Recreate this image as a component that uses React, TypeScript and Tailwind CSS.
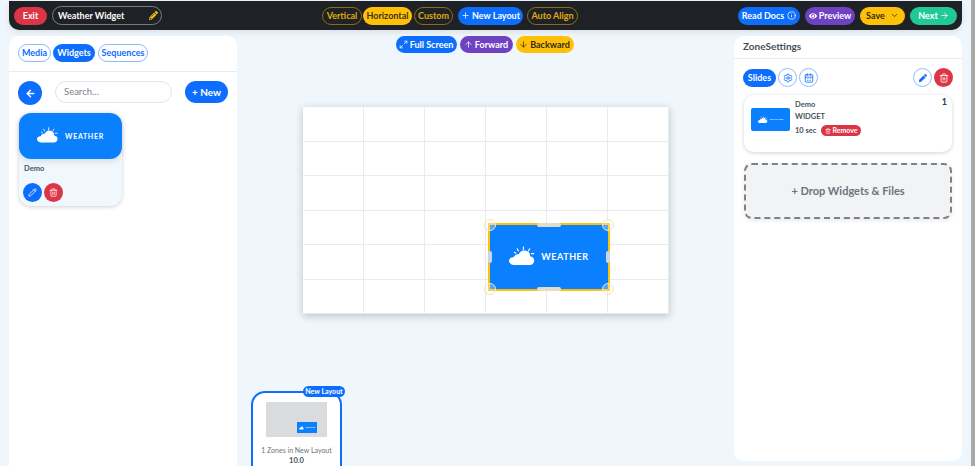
import {ArrowDown, ArrowLeft, ArrowRight, ArrowUp, CalendarDays, ChevronDown, Info, Maximize2, Pencil, Plus, Settings, Trash2} from "lucide-react";
import {FaEye, FaPen, FaPencilAlt} from "react-icons/fa";

const font = "font-['Lato','Noto_Sans',sans-serif]";

interface WeatherLogoProps {
    width: number;
    textClass: string;
    gapClass: string;
}

const WeatherLogo = ({width, textClass, gapClass}: WeatherLogoProps) => (
    <div className={`flex flex-row items-center ${gapClass}`}>
        <svg width={width} height={width * 0.8} viewBox="0 0 30 24" fill="none">
            <g stroke="#fff" strokeWidth="1.2" strokeLinecap="round">
                <path d="M16 1v3M9 3l1.400 2.400M23 3l-1.400 2.400M27.500 8.500h-2.500M6 7l1.500 1"/>
            </g>
            <path d="M11 9a6.500 6.500 0 0 1 12.500 2.500c2.500.5 4.500 2 4.500 4.500 0 3-2 5-5 5H5c-3 0-5-2-5-4.500S2 12.500 5 12.500c1-2 3.500-3.500 6-3.500z" fill="#fff"/>
        </svg>
        <span className={`font-bold text-white ${textClass}`}>WEATHER</span>
    </div>
);

const TopBar = () => (
    <header className="h-[29px] mt-px ml-[9px] mr-[9px] pl-[5px] pr-[5px] bg-[#1e2227] rounded-b-[10px] shadow-[0_2px_6px_rgba(0,0,0,0.1)] flex flex-row items-center shrink-0">
        <div className="flex flex-row items-center gap-[5px]">
            <button className="w-[33px] h-[18px] rounded-full bg-[#dc3545] text-white text-[9px] font-bold">Exit</button>
            <div className="w-[110px] h-[19px] rounded-full border border-[#7a7d80] pl-[5px] pr-[3px] flex flex-row items-center justify-between text-white text-[9px] font-bold">
                Weather Widget
                <FaPencilAlt size={9} className="text-[#ffc107]"/>
            </div>
        </div>
        <div className="ml-[160px] flex flex-row items-center text-[9px] font-bold">
            <button className="w-[40px] h-[18px] rounded-full border border-[#8a6d14] text-[#e0ab0c]">Vertical</button>
            <button className="w-[49px] h-[18px] ml-px rounded-full bg-[#ffc107] text-[#3a3320]">Horizontal</button>
            <button className="w-[39px] h-[18px] ml-[2px] rounded-full border border-[#8a6d14] text-[#e0ab0c]">Custom</button>
            <button className="w-[65px] h-[18px] ml-[5px] rounded-full bg-[#0d6efd] text-white flex flex-row items-center justify-center gap-[2px]">
                <Plus size={9}/> New Layout
            </button>
            <button className="w-[51px] h-[18px] ml-[4px] rounded-full border border-[#8a6d14] text-[#e0ab0c]">Auto Align</button>
        </div>
        <div className="ml-auto flex flex-row items-center gap-[5px] text-[9px] font-bold">
            <button className="w-[62px] h-[18px] rounded-full bg-[#0d6efd] text-white flex flex-row items-center justify-center gap-[3px]">
                Read Docs <Info size={9}/>
            </button>
            <button className="w-[50px] h-[18px] rounded-full bg-[#6f42c1] text-white flex flex-row items-center justify-center gap-[2px]">
                <FaEye size={8}/> Preview
            </button>
            <button className="w-[45px] h-[18px] rounded-full bg-[#ffc107] text-[#332b12] flex flex-row items-center justify-center gap-[5px]">
                Save <ChevronDown size={9}/>
            </button>
            <button className="w-[47px] h-[18px] rounded-full bg-[#20c997] text-white flex flex-row items-center justify-center gap-[2px]">
                Next <ArrowRight size={9}/>
            </button>
        </div>
    </header>
);

const LeftPanel = () => (
    <aside className="w-[228px] bg-white rounded-t-[10px] shrink-0 h-[430px]">
        <div className="h-[36px] border-b border-[#e9ecef] pt-[8px] pl-[9px] flex flex-row items-start gap-[2px] text-[9px] font-bold">
            <button className="w-[33px] h-[18px] rounded-full border border-[#8dbcfd] text-[#0d6efd]">Media</button>
            <button className="w-[42px] h-[18px] rounded-full bg-[#0d6efd] text-white">Widgets</button>
            <button className="w-[50px] h-[18px] ml-px rounded-full border border-[#8dbcfd] text-[#0d6efd]">Sequences</button>
        </div>
        <div className="pt-[9px] pl-[9px] pr-[9px] flex flex-row items-start">
            <button className="w-[24px] h-[24px] rounded-full bg-[#0d6efd] text-white flex items-center justify-center">
                <ArrowLeft size={11} strokeWidth={3}/>
            </button>
            <div className="ml-[13px] w-[117px] h-[22px] rounded-full border border-[#e3e5e8] pl-[8px] flex items-center text-[9.500px] text-[#7b8188]">Search...</div>
            <button className="ml-auto w-[43px] h-[22px] rounded-full bg-[#0d6efd] text-white text-[10px] font-bold">+ New</button>
        </div>
        <div className="mt-[8px] ml-[10px] w-[103px] h-[93px] rounded-[12px] bg-[#f0f8fe] shadow-[0_1px_4px_rgba(0,0,0,0.18)]">
            <div className="h-[46px] rounded-[12px] bg-[#0a80ff] flex items-center justify-center shadow-[0_2px_6px_rgba(0,0,0,0.12)]">
                <WeatherLogo width={22} textClass="text-[7px] tracking-[0.1em]" gapClass="gap-[6px]"/>
            </div>
            <p className="pt-[5px] pl-[5px] text-[7.500px] leading-[10px] font-bold text-[#4b5158]">Demo</p>
            <div className="mt-[9px] pl-[4px] flex flex-row gap-[2px]">
                <button className="w-[19px] h-[19px] rounded-full bg-[#0d6efd] text-white flex items-center justify-center"><Pencil size={9}/></button>
                <button className="w-[19px] h-[19px] rounded-full bg-[#dc3545] text-white flex items-center justify-center"><Trash2 size={9}/></button>
            </div>
        </div>
    </aside>
);

const CanvasStage = () => (
    <div className="relative w-[366px] h-[207px] bg-white shadow-[0_2px_8px_rgba(0,0,0,0.22)] grid grid-cols-6 grid-rows-6">
        {Array.from({length: 36}).map((_, i) => (
            <div key={i} className="border-r border-b border-[#e9eaec]"/>
        ))}
        <div className="absolute left-[185px] top-[116px] w-[122px] h-[68px] bg-[#0a80ff] border-2 border-[#ffc107] flex items-center justify-center">
            <WeatherLogo width={27} textClass="text-[9px] tracking-[0.06em]" gapClass="gap-[5px]"/>
            <span className="absolute -left-[6px] -top-[6px] w-[12px] h-[12px] rounded-full border border-[#f6e3b8] bg-white/30"/>
            <span className="absolute -right-[6px] -top-[6px] w-[12px] h-[12px] rounded-full border border-[#f6e3b8] bg-white/30"/>
            <span className="absolute -left-[6px] -bottom-[6px] w-[12px] h-[12px] rounded-full border border-[#f6e3b8] bg-white/30"/>
            <span className="absolute -right-[6px] -bottom-[6px] w-[12px] h-[12px] rounded-full border border-[#f6e3b8] bg-white/30"/>
            <span className="absolute left-[47px] -top-[2px] w-[24px] h-[4px] rounded-full bg-[#e3dcc8]"/>
            <span className="absolute left-[47px] -bottom-[2px] w-[24px] h-[4px] rounded-full bg-[#e3dcc8]"/>
            <span className="absolute -left-[2px] top-[26px] w-[4px] h-[12px] rounded-full bg-[#c8d8ea]"/>
            <span className="absolute -right-[2px] top-[26px] w-[4px] h-[12px] rounded-full bg-[#c8d8ea]"/>
        </div>
    </div>
);

const LayoutThumb = () => (
    <div className="relative ml-[14px] mt-[77px] w-[91px] h-[90px] shrink-0 rounded-[14px] border-2 border-[#0d6efd] bg-white flex flex-col items-center">
        <span className="absolute -right-[5px] -top-[7px] w-[42px] h-[11px] rounded-full bg-[#0d6efd] text-white text-[7px] leading-[11px] font-bold text-center">New Layout</span>
        <div className="relative mt-[9px] w-[61px] h-[35px] bg-[#d9dbdd]">
            <div className="absolute left-[31px] top-[20px] w-[20px] h-[11px] bg-[#0a80ff] flex items-center justify-center">
                <WeatherLogo width={5} textClass="text-[2px]" gapClass="gap-px"/>
            </div>
        </div>
        <p className="mt-[8px] text-[7px] leading-[10px] text-[#6c737a]">1 Zones in New Layout</p>
        <p className="mt-px text-[7.500px] leading-[10px] font-bold text-[#4b5158]">10.0</p>
    </div>
);

const CenterColumn = () => (
    <main className="flex-1 min-w-0 flex flex-col">
        <div className="flex flex-row justify-center gap-[3px] text-[9px] font-bold pr-[2px]">
            <button className="w-[61px] h-[17px] rounded-full bg-[#0d6efd] text-white flex flex-row items-center justify-center gap-[2px]">
                <Maximize2 size={9}/> Full Screen
            </button>
            <button className="w-[53px] h-[17px] rounded-full bg-[#6f42c1] text-white flex flex-row items-center justify-center gap-[2px]">
                <ArrowUp size={9}/> Forward
            </button>
            <button className="w-[58px] h-[17px] rounded-full bg-[#ffc107] text-[#332b12] flex flex-row items-center justify-center gap-[2px]">
                <ArrowDown size={9}/> Backward
            </button>
        </div>
        <div className="mt-[54px] ml-[66px]">
            <CanvasStage/>
        </div>
        <LayoutThumb/>
    </main>
);

const RightPanel = () => (
    <aside className="w-[228px] h-[425px] bg-white rounded-[10px] shrink-0">
        <div className="h-[23px] border-b border-[#e9ecef] pl-[9px] pt-[3px] text-[10px] leading-[14px] font-bold text-[#4b5158]">ZoneSettings</div>
        <div className="pt-[9px] pl-[9px] pr-[9px] flex flex-row items-center">
            <button className="w-[33px] h-[18px] rounded-full bg-[#0d6efd] text-white text-[9px] font-bold">Slides</button>
            <button className="ml-[2px] w-[19px] h-[19px] rounded-full border border-[#8dbcfd] text-[#0d6efd] flex items-center justify-center"><Settings size={10}/></button>
            <button className="ml-[2px] w-[19px] h-[19px] rounded-full border border-[#8dbcfd] text-[#0d6efd] flex items-center justify-center"><CalendarDays size={10}/></button>
            <button className="ml-auto w-[19px] h-[19px] rounded-full border border-[#8dbcfd] text-[#0d6efd] flex items-center justify-center"><FaPen size={8}/></button>
            <button className="ml-[2px] w-[19px] h-[19px] rounded-full bg-[#dc3545] text-white flex items-center justify-center"><Trash2 size={10}/></button>
        </div>
        <div className="relative mt-[8px] mx-[10px] h-[57px] rounded-[10px] bg-white shadow-[0_1px_4px_rgba(0,0,0,0.18)] pl-[7px] flex flex-row">
            <div className="mt-[13px] w-[39px] h-[23px] rounded-[2px] bg-[#0a80ff] flex items-center justify-center">
                <WeatherLogo width={10} textClass="text-[2.500px] tracking-[0.1em]" gapClass="gap-[2px]"/>
            </div>
            <div className="ml-[5px] pt-[5px] text-[7.500px] font-bold text-[#4b5158]">
                <p className="leading-[10px]">Demo</p>
                <p className="mt-[2px] leading-[10px]">WIDGET</p>
                <div className="mt-[3px] flex flex-row items-center gap-[5px]">
                    10 sec
                    <span className="w-[40px] h-[11px] rounded-full bg-[#dc3545] text-white text-[7px] flex flex-row items-center justify-center gap-px">
                        <Trash2 size={6}/> Remove
                    </span>
                </div>
            </div>
            <span className="absolute right-[5px] top-[2px] text-[9px] leading-[10px] font-bold text-[#343a40]">1</span>
        </div>
        <div className="mt-[11px] mx-[10px] h-[56px] rounded-[8px] border-2 border-dashed border-[#7d8287] bg-[#f2f3f5] flex items-center justify-center text-[11px] font-bold text-[#6c737a] shadow-[0_2px_4px_rgba(0,0,0,0.08)]">
            + Drop Widgets &amp; Files
        </div>
    </aside>
);

const App = () => (
    <div className={`${font} w-[975px] h-[466px] overflow-hidden bg-[#eff7fd] flex flex-row`}>
        <div className="flex-1 min-w-0 flex flex-col">
            <TopBar/>
            <div className="mt-[6px] pl-[9px] pr-[9px] flex flex-row items-start flex-1 min-h-0">
                <LeftPanel/>
                <CenterColumn/>
                <RightPanel/>
            </div>
        </div>
        <div className="w-[4px] shrink-0 bg-[#a9a9a9]"/>
    </div>
);

export default App;
